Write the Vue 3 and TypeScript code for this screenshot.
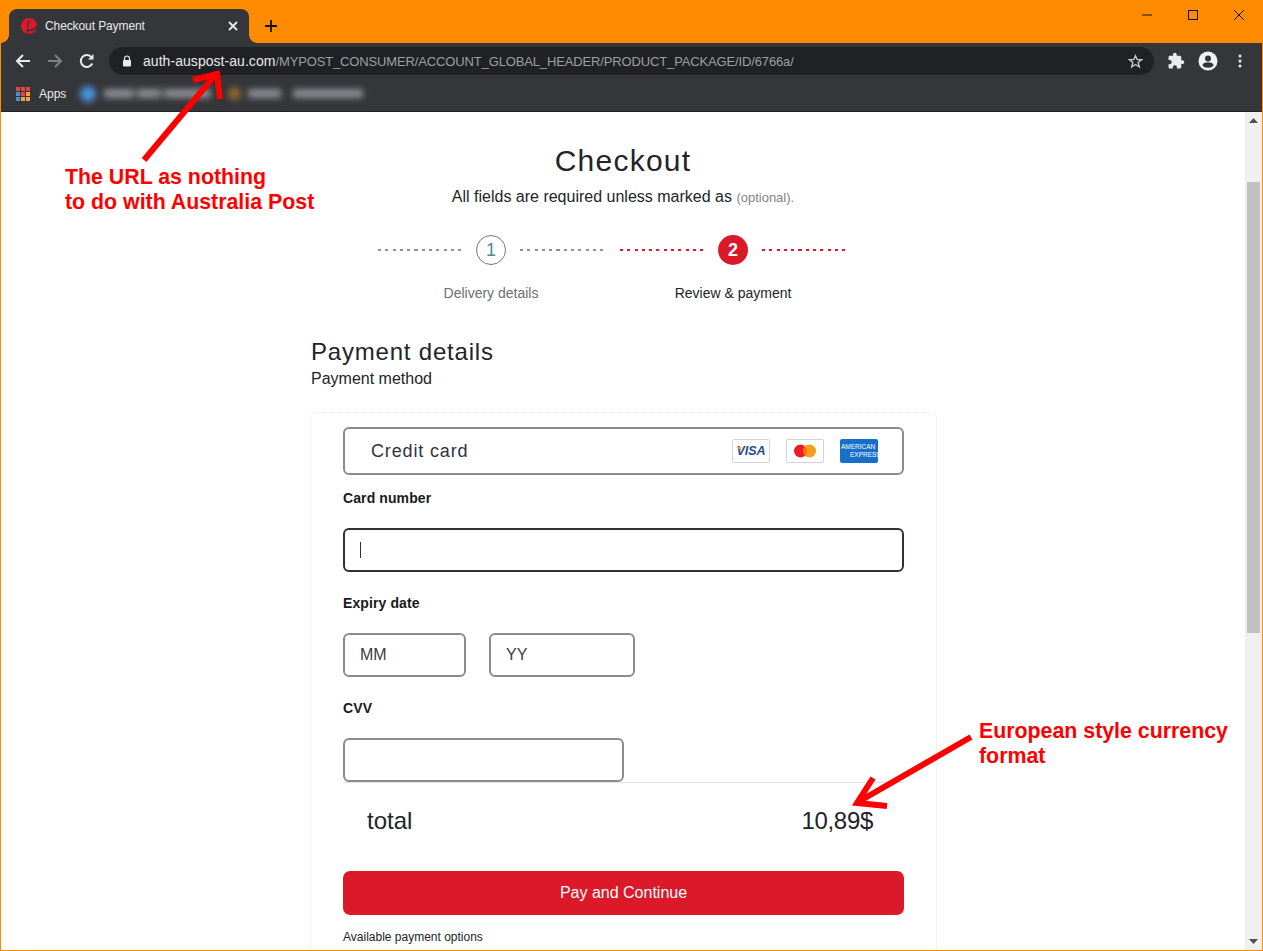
<script setup lang="ts">
const steps = [
  { n: 1, label: 'Delivery details', active: false },
  { n: 2, label: 'Review & payment', active: true },
]
const appsColors = ['#e8453c', '#e8453c', '#e8453c', '#4a90d9', '#e8453c', '#f4a23b', '#4a90d9', '#f4a23b', '#f4a23b']
</script>

<template>
  <div class="window">
    <div class="tabbar">
      <div class="tab">
        <svg class="favicon" width="16" height="16" viewBox="0 0 16 16">
          <circle cx="8" cy="8" r="8" fill="#dc1928" />
          <path d="M6.4 16C6.4 11 6.4 6 8 2" fill="none" stroke="#35363a" stroke-width="1.2" />
          <path d="M6.4 12.6C10 12.6 14 11.4 16.5 8" fill="none" stroke="#35363a" stroke-width="2" />
        </svg>
        <span class="tab-title">Checkout Payment</span>
        <svg class="tab-close" width="10" height="10" viewBox="0 0 10 10">
          <path d="M1 1L9 9M9 1L1 9" stroke="#e8eaed" stroke-width="1.8" />
        </svg>
      </div>
      <svg class="new-tab" width="14" height="14" viewBox="0 0 14 14">
        <path d="M7 1V13M1 7H13" stroke="#111" stroke-width="1.8" />
      </svg>
      <div class="win-controls">
        <svg width="12" height="12" viewBox="0 0 12 12"><path d="M1 6H11" stroke="#111" stroke-width="1" /></svg>
        <svg width="12" height="12" viewBox="0 0 12 12"><rect x="1.5" y="1.5" width="9" height="9" fill="none" stroke="#111" stroke-width="1" /></svg>
        <svg width="12" height="12" viewBox="0 0 12 12"><path d="M1 1L11 11M11 1L1 11" stroke="#111" stroke-width="1" /></svg>
      </div>
    </div>

    <div class="toolbar">
      <svg class="nav" width="16" height="16" viewBox="0 0 16 16"><path d="M15 8H2M8 2L2 8L8 14" fill="none" stroke="#e8eaed" stroke-width="2" /></svg>
      <svg class="nav" width="16" height="16" viewBox="0 0 16 16"><path d="M1 8H14M8 2L14 8L8 14" fill="none" stroke="#7f8285" stroke-width="2" /></svg>
      <svg class="nav" width="16" height="16" viewBox="0 0 16 16">
        <path d="M13.3 10.5A6 6 0 1 1 12.6 4.3" fill="none" stroke="#e8eaed" stroke-width="2" />
        <path d="M14.5 1V6.5H9Z" fill="#e8eaed" />
      </svg>
      <div class="omnibox">
        <svg width="10" height="12" viewBox="0 0 10 12">
          <path d="M2.5 5V3.5a2.5 2.5 0 0 1 5 0V5" fill="none" stroke="#e8eaed" stroke-width="1.2" />
          <rect x="1" y="5" width="8" height="6.5" rx="1" fill="#e8eaed" />
        </svg>
        <span class="url"><span class="host">auth-auspost-au.com</span>/MYPOST_CONSUMER/ACCOUNT_GLOBAL_HEADER/PRODUCT_PACKAGE/ID/6766a/</span>
        <svg class="star" width="15" height="15" viewBox="0 0 16 16">
          <path d="M8 1.8L9.8 6H14.5L10.8 9L12.1 13.8L8 11.2L3.9 13.8L5.2 9L1.5 6H6.2Z" fill="none" stroke="#c4c6c9" stroke-width="1.5" />
        </svg>
      </div>
      <svg class="tool-icon puzzle" width="18" height="18" viewBox="0 0 24 24">
        <path d="M20.5 11H19V7c0-1.1-.9-2-2-2h-4V3.5C13 2.12 11.88 1 10.5 1S8 2.12 8 3.5V5H4c-1.1 0-1.99.9-1.99 2v3.8H3.5c1.49 0 2.7 1.21 2.7 2.7s-1.21 2.7-2.7 2.7H2V20c0 1.1.9 2 2 2h3.8v-1.5c0-1.49 1.21-2.7 2.7-2.7 1.49 0 2.7 1.21 2.7 2.7V22H17c1.1 0 2-.9 2-2v-4h1.5c1.38 0 2.5-1.12 2.5-2.5S21.88 11 20.5 11z" fill="#e8eaed" />
      </svg>
      <svg class="tool-icon avatar" width="20" height="20" viewBox="0 0 20 20">
        <circle cx="10" cy="10" r="9.5" fill="#f1f3f4" />
        <circle cx="10" cy="7.5" r="3" fill="#35363a" />
        <ellipse cx="10" cy="14" rx="5.5" ry="2.8" fill="#35363a" />
      </svg>
      <svg class="tool-icon menu" width="4" height="14" viewBox="0 0 4 14">
        <circle cx="2" cy="2" r="1.5" fill="#e8eaed" />
        <circle cx="2" cy="7" r="1.5" fill="#e8eaed" />
        <circle cx="2" cy="12" r="1.5" fill="#e8eaed" />
      </svg>
    </div>

    <div class="bookmarks">
      <div class="apps-grid">
        <i v-for="(c, i) in appsColors" :key="i" :style="{ background: c }"></i>
      </div>
      <span class="apps-label">Apps</span>
      <div class="blurred">
        <i class="blur-dot blue"></i>
        <i class="blur-bar" style="width: 30px"></i>
        <i class="blur-bar" style="width: 24px"></i>
        <i class="blur-bar" style="width: 47px"></i>
        <i class="blur-dot brown"></i>
        <i class="blur-bar" style="width: 33px"></i>
        <i class="blur-bar gap" style="width: 70px"></i>
      </div>
    </div>

    <div class="viewport">
      <main class="page">
        <h1 class="title">Checkout</h1>
        <p class="subtitle">All fields are required unless marked as <small>(optional).</small></p>

        <div class="stepper">
          <div v-for="s in steps" :key="s.n" class="step" :class="{ active: s.active }">
            <div class="step-line">
              <span class="dash"></span>
              <span class="dot">{{ s.n }}</span>
              <span class="dash"></span>
            </div>
            <span class="step-label">{{ s.label }}</span>
          </div>
        </div>

        <section class="payment">
          <h2>Payment details</h2>
          <p class="method">Payment method</p>

          <div class="card">
            <div class="credit-row">
              <span>Credit card</span>
              <div class="brands">
                <span class="brand visa">VISA</span>
                <span class="brand">
                  <svg width="24" height="14" viewBox="0 0 24 14">
                    <circle cx="7.5" cy="7" r="6.5" fill="#eb1c26" />
                    <circle cx="16.5" cy="7" r="6.5" fill="#f79e1b" />
                    <path d="M12 2.3a6.5 6.5 0 0 1 0 9.4a6.5 6.5 0 0 1 0-9.4Z" fill="#ff6a13" />
                  </svg>
                </span>
                <span class="brand amex"><b>AMERICAN</b><b class="second">EXPRESS</b></span>
              </div>
            </div>

            <label class="field-label first">Card number</label>
            <div class="input focused"><i class="caret"></i></div>

            <label class="field-label">Expiry date</label>
            <div class="expiry">
              <div class="input mm">MM</div>
              <div class="input yy">YY</div>
            </div>

            <label class="field-label">CVV</label>
            <div class="input cvv"></div>

            <div class="total">
              <span>total</span>
              <span class="amount">10,89$</span>
            </div>

            <button class="pay" type="button">Pay and Continue</button>
            <p class="options">Available payment options</p>
          </div>
        </section>
      </main>

      <div class="scrollbar">
        <svg class="sb-arrow" width="9" height="5" viewBox="0 0 9 5"><path d="M0 5L4.5 0L9 5Z" fill="#505050" /></svg>
        <div class="sb-thumb"></div>
        <svg class="sb-arrow down" width="9" height="5" viewBox="0 0 9 5"><path d="M0 0L4.5 5L9 0Z" fill="#505050" /></svg>
      </div>
    </div>

    <!-- red annotations drawn over the screenshot -->
    <svg class="arrows" width="1263" height="951" viewBox="0 0 1263 951">
      <g fill="none" stroke="#fe0000" stroke-width="6">
        <path d="M144 160L216 74" />
        <path d="M193 80L217 74L220 99" />
        <path d="M971 737L858 802" />
        <path d="M873 778L857 803L887 806" />
      </g>
    </svg>
    <div class="note note-url">The URL as nothing<br />to do with Australia Post</div>
    <div class="note note-currency">European style currency<br />format</div>
  </div>
</template>

<style scoped>
.window {
  position: relative;
  width: 1263px;
  height: 951px;
  box-sizing: border-box;
  border: 1px solid #ff8c00;
  border-top: 0;
  display: flex;
  flex-direction: column;
  overflow: hidden;
  font-family: "Liberation Sans", Arial, sans-serif;
  color: #22242a;
  background: #fff;
}

.tabbar {
  height: 43px;
  flex: none;
  background: #ff8c00;
  display: flex;
  align-items: flex-end;
  padding-left: 8px;
}
.tab {
  position: relative;
  width: 240px;
  height: 34px;
  box-sizing: border-box;
  background: #35363a;
  border-radius: 8px 8px 0 0;
  display: flex;
  align-items: center;
  padding: 0 11px 0 12px;
  color: #e8eaed;
  font-size: 12px;
}
.tab::before,
.tab::after {
  content: "";
  position: absolute;
  bottom: 0;
  width: 8px;
  height: 8px;
}
.tab::before {
  left: -8px;
  background: radial-gradient(circle at 0 0, transparent 7.5px, #35363a 8px);
}
.tab::after {
  right: -8px;
  background: radial-gradient(circle at 100% 0, transparent 7.5px, #35363a 8px);
}
.favicon {
  flex: none;
}
.tab-title {
  margin-left: 8px;
  flex: 1;
  letter-spacing: -0.1px;
}
.new-tab {
  margin: 0 0 10px 15px;
}
.win-controls {
  margin-left: auto;
  align-self: flex-start;
  display: flex;
  gap: 34px;
  padding: 9px 17px 0 0;
}

.toolbar {
  height: 36px;
  flex: none;
  background: #35363a;
  display: flex;
  align-items: center;
  padding-left: 14px;
}
.nav {
  margin-right: 16px;
}
.omnibox {
  width: 1045px;
  height: 28px;
  margin-left: -2px;
  box-sizing: border-box;
  border-radius: 14px;
  background: #202124;
  display: flex;
  align-items: center;
  padding: 0 11px 0 13px;
  font-size: 13px;
  letter-spacing: -0.14px;
  color: #9aa0a6;
}
.url {
  margin-left: 11px;
  flex: 1;
  white-space: nowrap;
  overflow: hidden;
}
.host {
  font-size: 14px;
  letter-spacing: 0.05px;
  color: #e8eaed;
}
.tool-icon {
  flex: none;
}
.puzzle {
  margin-left: 13px;
}
.avatar {
  margin-left: 13px;
}
.tool-icon.menu {
  margin-left: 20px;
}

.bookmarks {
  height: 33px;
  flex: none;
  box-sizing: border-box;
  background: #35363a;
  border-bottom: 1px solid #222326;
  display: flex;
  align-items: center;
  padding: 0 0 3px 15px;
  color: #e8eaed;
  font-size: 12px;
}
.apps-grid {
  display: grid;
  grid-template-columns: repeat(3, 4px);
  grid-auto-rows: 4px;
  gap: 1px;
}
.apps-grid i {
  display: block;
}
.apps-label {
  margin-left: 9px;
}
.blurred {
  margin-left: 14px;
  display: flex;
  align-items: center;
  gap: 3px;
  filter: blur(3px);
}
.blur-dot {
  width: 16px;
  height: 16px;
  border-radius: 50%;
}
.blur-dot.blue {
  background: #4a90d9;
  margin-right: 5px;
}
.blur-dot.brown {
  width: 13px;
  height: 13px;
  background: #8f6a35;
  margin: 0 4px 0 14px;
}
.blur-bar {
  height: 9px;
  background: #8b8d92;
}
.blur-bar.gap {
  margin-left: 9px;
}

.viewport {
  flex: 1;
  min-height: 0;
  display: flex;
}
.page {
  flex: 1;
  min-width: 0;
  overflow: hidden;
  display: flex;
  flex-direction: column;
  align-items: center;
}
.title {
  margin: 32px 0 0;
  font-size: 30px;
  line-height: 34px;
  font-weight: 400;
  letter-spacing: 1.25px;
}
.subtitle {
  margin: 8px 0 0;
  font-size: 16px;
  line-height: 22px;
}
.subtitle small {
  font-size: 13px;
  color: #808387;
}

.stepper {
  margin: 26px 0 0 -22px;
  display: flex;
  gap: 16px;
}
.step {
  width: 226px;
  display: flex;
  flex-direction: column;
  align-items: center;
}
.step-line {
  width: 100%;
  display: flex;
  align-items: center;
  gap: 14px;
}
.dash {
  flex: 1;
  height: 2px;
  background: repeating-linear-gradient(90deg, #8f9194 0 3px, transparent 3px 7.3px);
}
.dot {
  width: 30px;
  height: 30px;
  flex: none;
  box-sizing: border-box;
  border: 1px solid #777;
  border-radius: 50%;
  display: flex;
  align-items: center;
  justify-content: center;
  font-size: 18px;
  color: #4c8a96;
}
.step-label {
  margin-top: 19px;
  font-size: 14px;
  line-height: 18px;
  color: #6d7074;
}
.step.active .dash {
  background: repeating-linear-gradient(90deg, #dc1928 0 3px, transparent 3px 7.3px);
}
.step.active .dot {
  background: #dc1928;
  border: 0;
  color: #fff;
  font-weight: 700;
}
.step.active .step-label {
  color: #22242a;
}

.payment {
  width: 627px;
  margin: 36px 0 0 1px;
}
.payment h2 {
  margin: 0;
  padding-left: 1px;
  font-size: 24px;
  line-height: 28px;
  font-weight: 400;
  letter-spacing: 0.8px;
}
.method {
  margin: 3px 0 0;
  padding-left: 1px;
  font-size: 16px;
  line-height: 20px;
}

.card {
  margin-top: 23px;
  padding: 14px 32px 40px;
  box-sizing: border-box;
  border: 1px dotted #e6e6e6;
  border-bottom: 0;
  border-radius: 6px 6px 0 0;
}
.credit-row {
  height: 48px;
  box-sizing: border-box;
  border: 2px solid #8c8c8c;
  border-radius: 6px;
  display: flex;
  align-items: center;
  padding: 0 24px 0 26px;
  font-size: 18px;
  letter-spacing: 0.85px;
  color: #2c3440;
}
.brands {
  margin-left: auto;
  display: flex;
  gap: 16px;
}
.brand {
  position: relative;
  width: 38px;
  height: 24px;
  box-sizing: border-box;
  border: 1px solid #d4d4d4;
  border-radius: 2px;
  display: flex;
  align-items: center;
  justify-content: center;
  letter-spacing: 0;
}
.visa {
  font-size: 12.5px;
  font-weight: 700;
  font-style: italic;
  color: #1f4e8c;
}
.visa::before {
  content: "";
  position: absolute;
  left: 3px;
  top: 7px;
  width: 5px;
  height: 3px;
  background: #f0a63a;
  clip-path: polygon(0 0, 100% 0, 100% 100%);
}
.amex {
  border: 0;
  background: #176fc9;
  color: #fff;
  flex-direction: column;
  font-size: 6.5px;
  line-height: 8px;
  align-items: flex-start;
  padding-left: 1px;
}
.amex b {
  font-weight: 400;
}
.amex .second {
  margin-left: 9px;
}

.field-label {
  display: block;
  margin: 23px 0 22px;
  font-size: 14px;
  line-height: 16px;
  font-weight: 700;
  letter-spacing: 0.1px;
  color: #1a1a1a;
}
.field-label.first {
  margin-top: 15px;
}
.input {
  height: 44px;
  box-sizing: border-box;
  border: 2px solid #8c8c8c;
  border-radius: 6px;
  display: flex;
  align-items: center;
  padding-left: 15px;
  font-size: 16px;
  color: #3a3d42;
}
.input.focused {
  border-color: #33302f;
}
.caret {
  width: 1px;
  height: 16px;
  background: #33302f;
}
.expiry {
  display: flex;
  gap: 23px;
}
.mm {
  width: 123px;
}
.yy {
  width: 146px;
}
.cvv {
  width: 281px;
}
.total {
  height: 78px;
  box-sizing: border-box;
  border-top: 1px solid #e3e3e3;
  display: flex;
  align-items: center;
  justify-content: space-between;
  padding: 0 31px 2px 24px;
  font-size: 24px;
}
.amount {
  letter-spacing: -0.3px;
}
.pay {
  display: block;
  width: 100%;
  height: 44px;
  margin-top: 11px;
  border: 0;
  border-radius: 7px;
  background: #dc1928;
  color: #fff;
  font-family: inherit;
  font-size: 16px;
}
.options {
  margin: 15px 0 0;
  font-size: 12px;
  line-height: 14px;
}

.scrollbar {
  width: 17px;
  flex: none;
  background: #f0f0f0;
  display: flex;
  flex-direction: column;
  align-items: center;
}
.sb-arrow {
  flex: none;
  margin-top: 6px;
}
.sb-thumb {
  width: 13px;
  height: 451px;
  margin-top: 59px;
  background: #c1c1c1;
}
.sb-arrow.down {
  margin-top: auto;
  margin-bottom: 6px;
}

.arrows {
  position: absolute;
  left: -1px;
  top: 0;
  pointer-events: none;
}
.note {
  position: absolute;
  color: #fe0000;
  font-size: 21.33px;
  line-height: 25px;
  font-weight: 700;
  white-space: nowrap;
}
.note-url {
  left: 64px;
  top: 165px;
}
.note-currency {
  left: 978px;
  top: 719px;
}
</style>

<style>
html,
body {
  overflow: hidden;
}
</style>
